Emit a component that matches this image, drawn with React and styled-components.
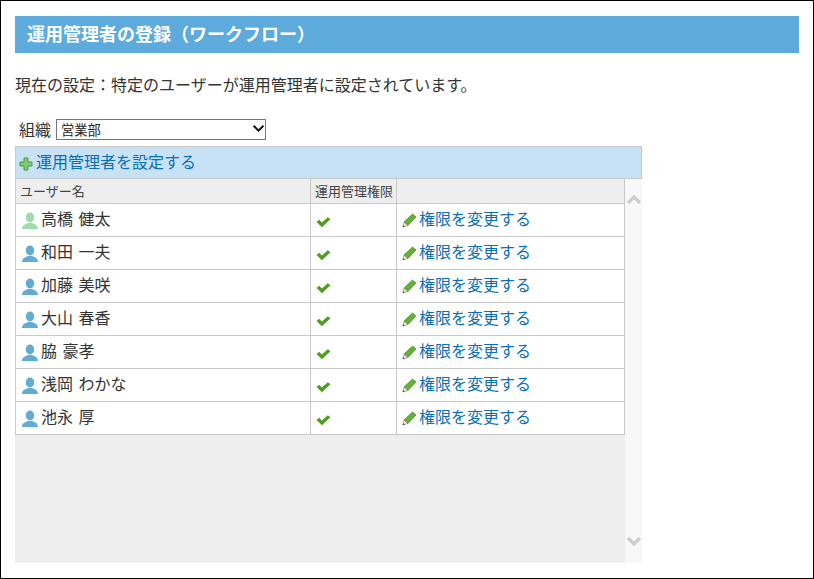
import React from "react";
import styled, { createGlobalStyle } from "styled-components";

const Global = createGlobalStyle`
  html, body { margin: 0; padding: 0; background: #fff; }
  body { font-family: "Noto Sans CJK JP", "Noto Sans", sans-serif; color: #333; }
`;
const Frame = styled.div`
  box-sizing: border-box; width: 814px; height: 579px;
  border: 1px solid #000; padding: 15px 14px 0 14px;
`;
const Title = styled.h1`
  margin: 0; height: 37px; background: #5dabdc; color: #fff;
  font-size: 18px; font-weight: 700; line-height: 35px; padding-left: 12px;
`;
const Status = styled.p`
  margin: 0; padding-top: 19px; height: 27px; font-size: 16px; line-height: 25px; color: #333;
`;
const OrgRow = styled.div`
  display: flex; align-items: center; gap: 5px;
  margin-top: 20px; padding-left: 4px; height: 20px; font-size: 16px;
`;
const OrgSelect = styled.div`
  box-sizing: border-box; width: 210px; height: 21px; border: 1px solid #767676;
  display: flex; align-items: center; justify-content: space-between;
  padding: 0 0 0 4px; font-size: 13.300px; color: #222; background: #fff;
`;
const Panel = styled.div`width: 627px; margin-top: 7px;`;
const AddBar = styled.div`
  box-sizing: border-box; height: 33px; background: #c8e2f5; border: 1px solid #c8c8c8;
  display: flex; align-items: center; padding: 0 0 3px 3px;
  font-size: 16px; color: #0b6fb5; gap: 3px;
`;
const Body = styled.div`display: flex; height: 384px;`;
const Pane = styled.div`width: 610px; background: #eee;`;
const Table = styled.table`
  width: 610px; border-collapse: collapse; table-layout: fixed; background: #fff;
`;
const Th = styled.th`
  box-sizing: border-box; height: 24px; padding: 0 4px; background: #eee;
  border: 1px solid #c8c8c8; border-top: 0; text-align: left;
  font-size: 13px; font-weight: 400; color: #444; line-height: 22px; white-space: nowrap;
`;
const Td = styled.td`
  box-sizing: border-box; height: 33px; padding: 0 0 3px 5px; border: 1px solid #c8c8c8;
  font-size: 16px; color: #333; line-height: 26px; vertical-align: middle;
`;
const CellRow = styled.div`display: flex; align-items: center; gap: ${p => p.$gap ?? 1}px;`;
const Name = styled.span`word-spacing: 2px; padding-left: 1px;`;
const Action = styled.span`color: #0b6fb5;`;
const Scroll = styled.div`
  width: 17px; background: #f8f8f8; display: flex; flex-direction: column;
  justify-content: space-between; align-items: center; padding: 15px 0 16px; box-sizing: border-box;
`;

const Plus = () => (
  <svg width="14" height="14" viewBox="0 0 14 14" style={{ marginTop: 6, flex: "none" }}>
    <path d="M5 1h4v4h4v4H9v4H5V9H1V5h4z" fill="#7fca6e" stroke="#4d9a48" strokeWidth="1" />
  </svg>
);
const User = ({ color }) => (
  <svg width="18" height="18" viewBox="0 0 18 18" style={{ marginTop: 5, flex: "none" }}>
    <ellipse cx="9" cy="5.500" rx="4.200" ry="5" fill={color} />
    <path d="M1 17c0-3.800 3-4.800 6-6h4c3 1.200 6 2.200 6 6z" fill={color} />
  </svg>
);
const Check = () => (
  <svg width="15" height="12" viewBox="0 0 14 11" style={{ marginTop: 8, flex: "none" }}>
    <path d="M0.500 5.500 3 3.500 5.500 6 11 1l2.500 2L5.500 10.500z" fill="#4f9e1f" />
  </svg>
);
const Pencil = () => (
  <svg width="15" height="15" viewBox="0 0 15 15" style={{ marginTop: 5, flex: "none" }}>
    <path d="M2 9 10.500 1l3.500 3-8 8.500z" fill="#63b236" stroke="#3f8a22" strokeWidth=".7" />
    <path d="M2 9 .8 14 6 12.500z" fill="#efe8c8" stroke="#666" strokeWidth=".5" />
    <path d="M.8 14 1.200 12.200 2.600 13.500z" fill="#333" />
  </svg>
);
const Chevron = ({ up, size = 16, color = "#ccc", width = 3.200 }) => (
  <svg width={size} height={size * 0.625} viewBox="0 0 16 10">
    <path d={up ? "M2 9 8 3l6 6" : "M2 1l6 6 6-6"} fill="none" stroke={color} strokeWidth={width} />
  </svg>
);

const users = ["高橋 健太", "和田 一夫", "加藤 美咲", "大山 春香", "脇 豪孝", "浅岡 わかな", "池永 厚"];

export default function App() {
  return (
    <>
      <Global />
      <Frame>
        <Title>運用管理者の登録（ワークフロー）</Title>
        <Status>現在の設定：特定のユーザーが運用管理者に設定されています。</Status>
        <OrgRow>
          組織
          <OrgSelect>
            営業部
            <Chevron size={13} color="#111" width={2.500} />
          </OrgSelect>
        </OrgRow>
        <Panel>
          <AddBar><Plus />運用管理者を設定する</AddBar>
          <Body>
            <Pane>
              <Table>
                <colgroup>
                  <col style={{ width: 295 }} />
                  <col style={{ width: 86 }} />
                  <col />
                </colgroup>
                <thead>
                  <tr>
                    <Th>ユーザー名</Th>
                    <Th>運用管理権限</Th>
                    <Th />
                  </tr>
                </thead>
                <tbody>
                  {users.map((u, i) => (
                    <tr key={u}>
                      <Td><CellRow><User color={i === 0 ? "#9edcae" : "#62acd3"} /><Name>{u}</Name></CellRow></Td>
                      <Td><CellRow><Check /></CellRow></Td>
                      <Td><CellRow $gap={2}><Pencil /><Action>権限を変更する</Action></CellRow></Td>
                    </tr>
                  ))}
                </tbody>
              </Table>
            </Pane>
            <Scroll>
              <Chevron up />
              <Chevron />
            </Scroll>
          </Body>
        </Panel>
      </Frame>
    </>
  );
}
